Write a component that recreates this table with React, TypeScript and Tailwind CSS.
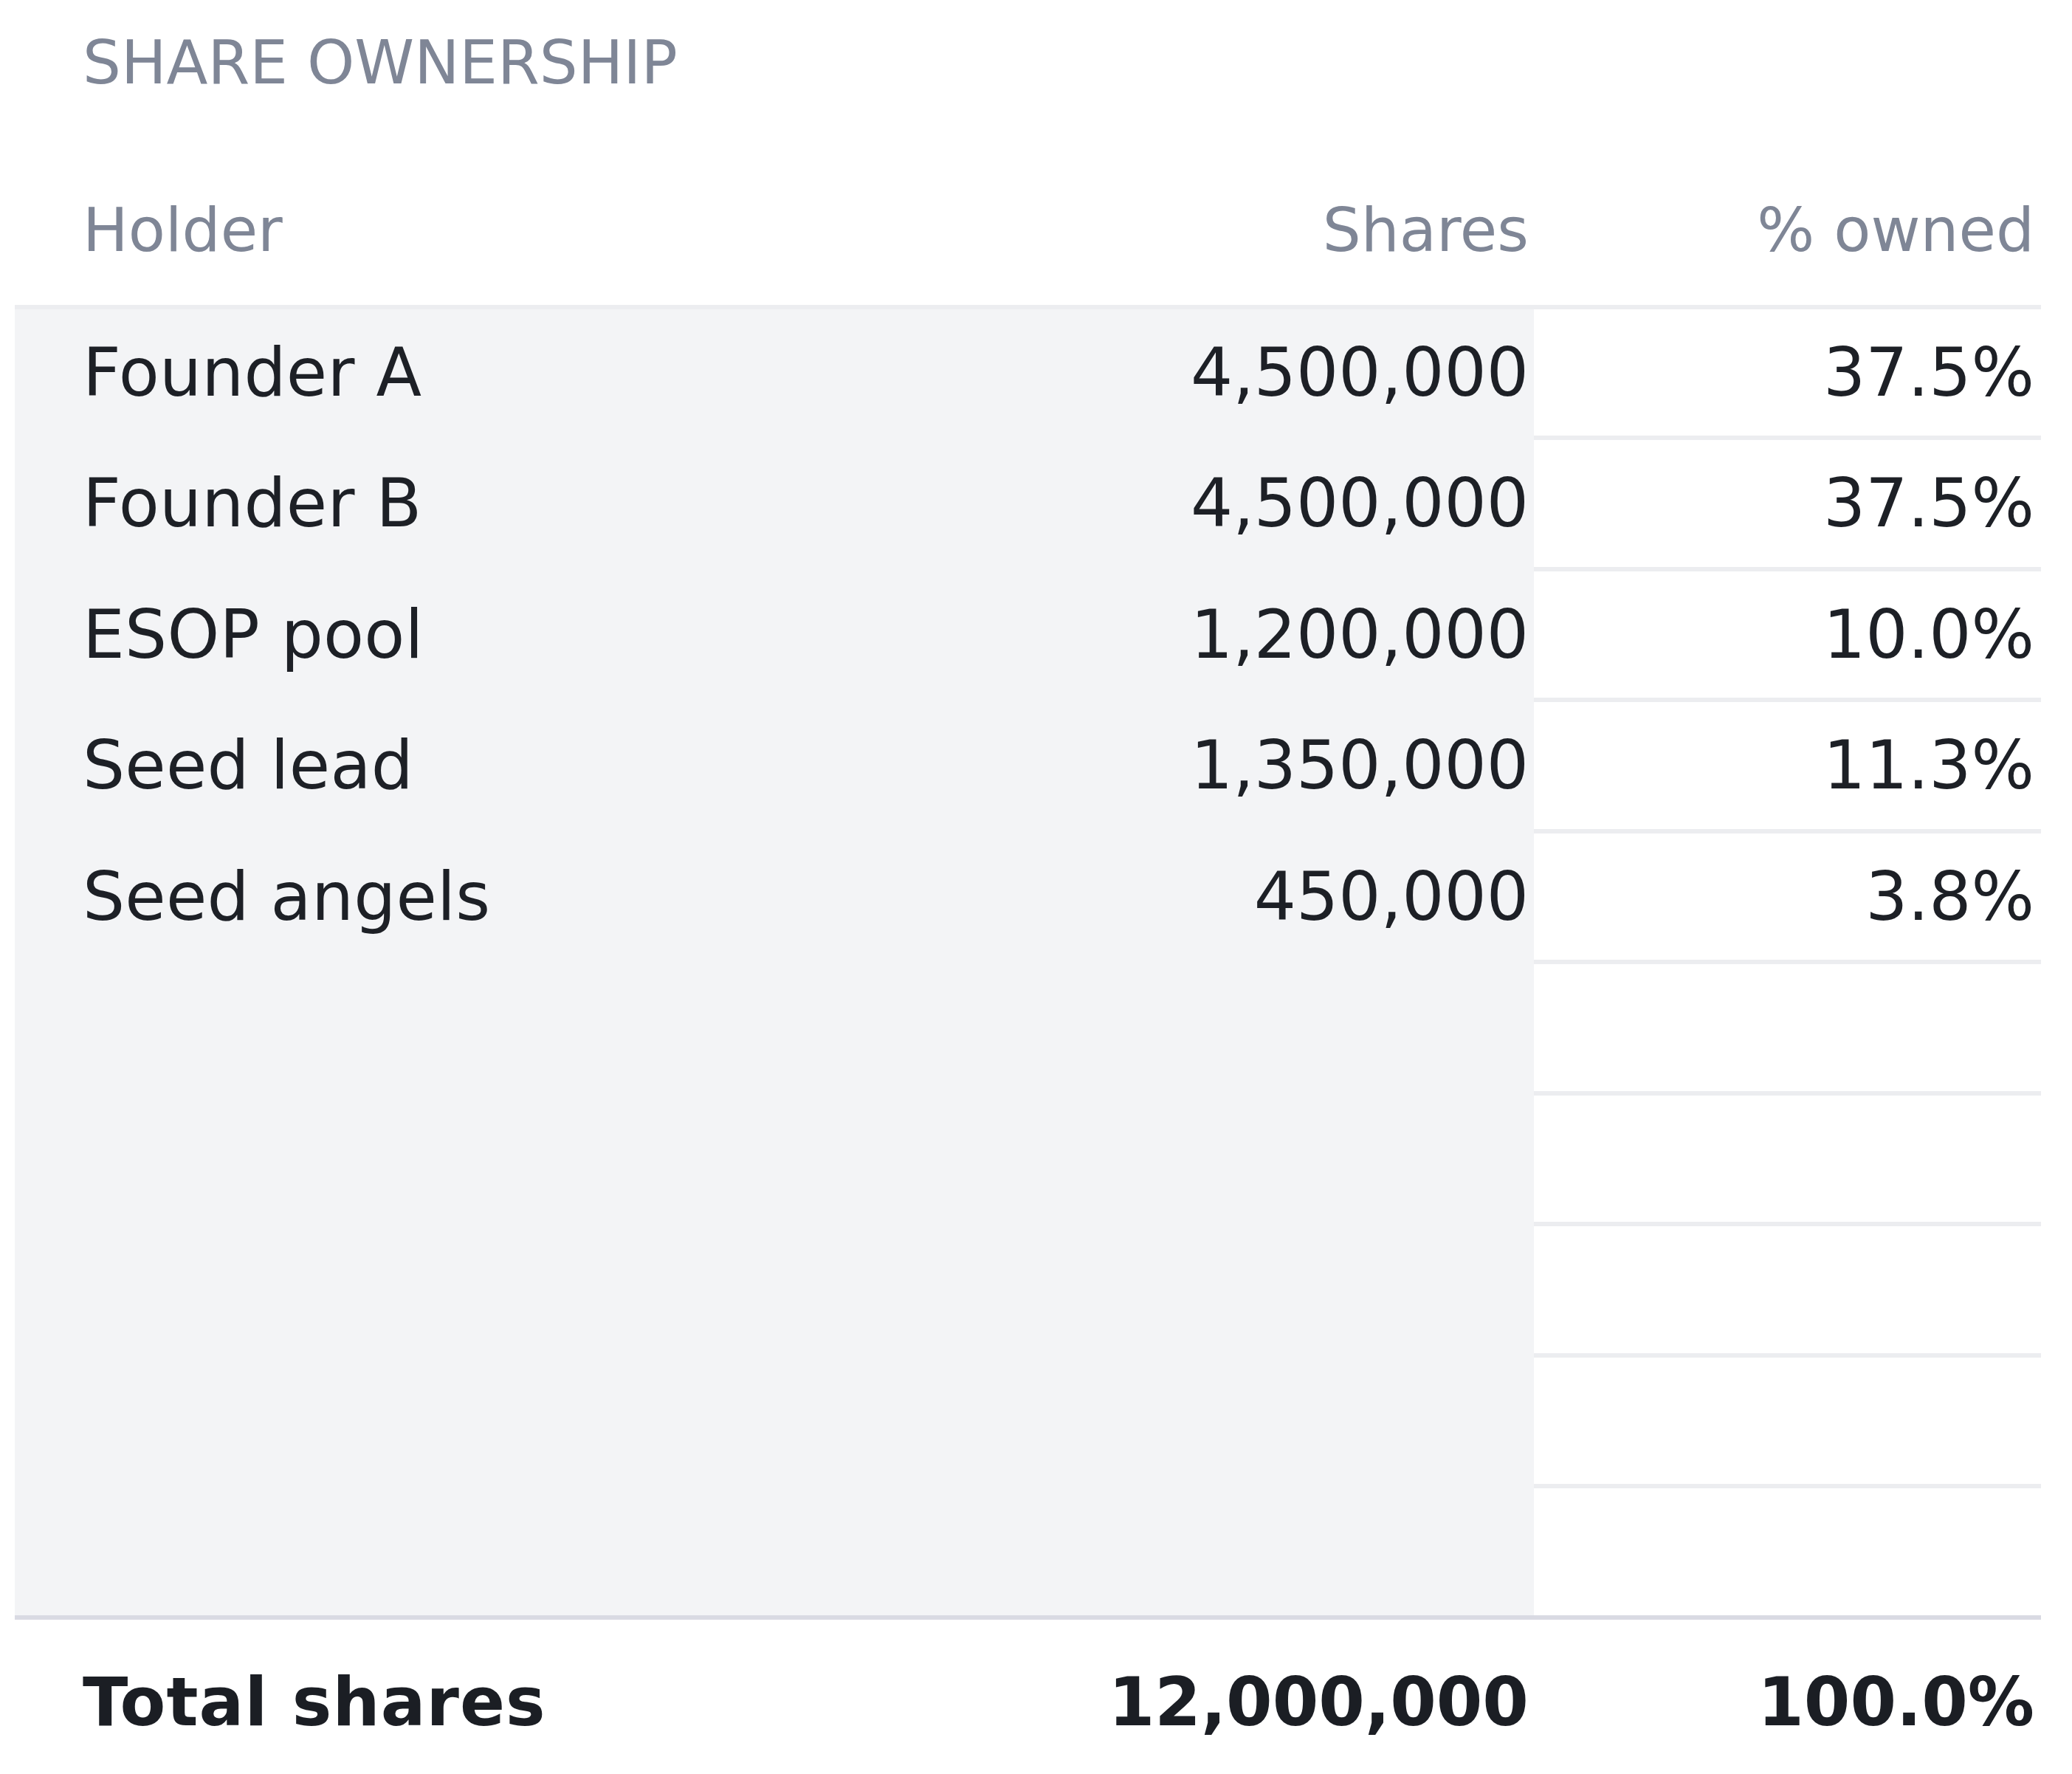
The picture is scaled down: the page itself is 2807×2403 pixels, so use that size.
const holders = [
  { name: "Founder A", shares: "4,500,000", pct: "37.5%" },
  { name: "Founder B", shares: "4,500,000", pct: "37.5%" },
  { name: "ESOP pool", shares: "1,200,000", pct: "10.0%" },
  { name: "Seed lead", shares: "1,350,000", pct: "11.3%" },
  { name: "Seed angels", shares: "450,000", pct: "3.8%" },
];

const ROW_COUNT = 10;

export default function App() {
  const rows = Array.from({ length: ROW_COUNT }, (_, i) => holders[i] ?? null);

  return (
    <div className="min-h-screen bg-white pl-[20px] pr-[42px] pt-[44px] font-['DejaVu_Sans',sans-serif]">
      <h2 className="ml-[92px] text-[81.8px] leading-none font-normal uppercase text-[#7f8696]">
        Share ownership
      </h2>

      <div className="mt-[145.5px]">
        {/* header */}
        <div className="flex pb-[59.5px] text-[82px] leading-none text-[#7f8696]">
          <div className="flex flex-1 justify-between pl-[92px] pr-[7px]">
            <span>Holder</span>
            <span>Shares</span>
          </div>
          <div className="w-[687px] pr-[9px] text-right">% owned</div>
        </div>

        {/* body */}
        <div className="border-t-[6px] border-[#ecedf0]">
          {rows.map((row, i) => {
            const last = i === ROW_COUNT - 1;
            return (
              <div key={i} className="flex text-[90px] leading-none text-[#1d2026]">
                <div
                  className={`flex flex-1 items-center justify-between bg-[#f3f4f6] pl-[92px] pr-[7px] ${
                    last ? "h-[171.5px]" : "h-[177.5px] border-b-[6px] border-[#f3f4f6]"
                  }`}
                >
                  <span className="tracking-[0.2px]">{row?.name}</span>
                  <span>{row?.shares}</span>
                </div>
                <div
                  className={`flex w-[687px] items-center justify-end pr-[9px] ${
                    last ? "h-[171.5px]" : "h-[177.5px] border-b-[6px] border-[#ecedf0]"
                  }`}
                >
                  {row?.pct}
                </div>
              </div>
            );
          })}
        </div>

        {/* total */}
        <div className="flex border-t-[6px] border-[#d9dae3] py-[67px] text-[90px] leading-none font-bold text-[#1b1e24]">
          <div className="flex flex-1 justify-between pl-[92px] pr-[7px]">
            <span className="tracking-[1.1px]">Total shares</span>
            <span>12,000,000</span>
          </div>
          <div className="w-[687px] pr-[9px] text-right">100.0%</div>
        </div>
      </div>
    </div>
  );
}
